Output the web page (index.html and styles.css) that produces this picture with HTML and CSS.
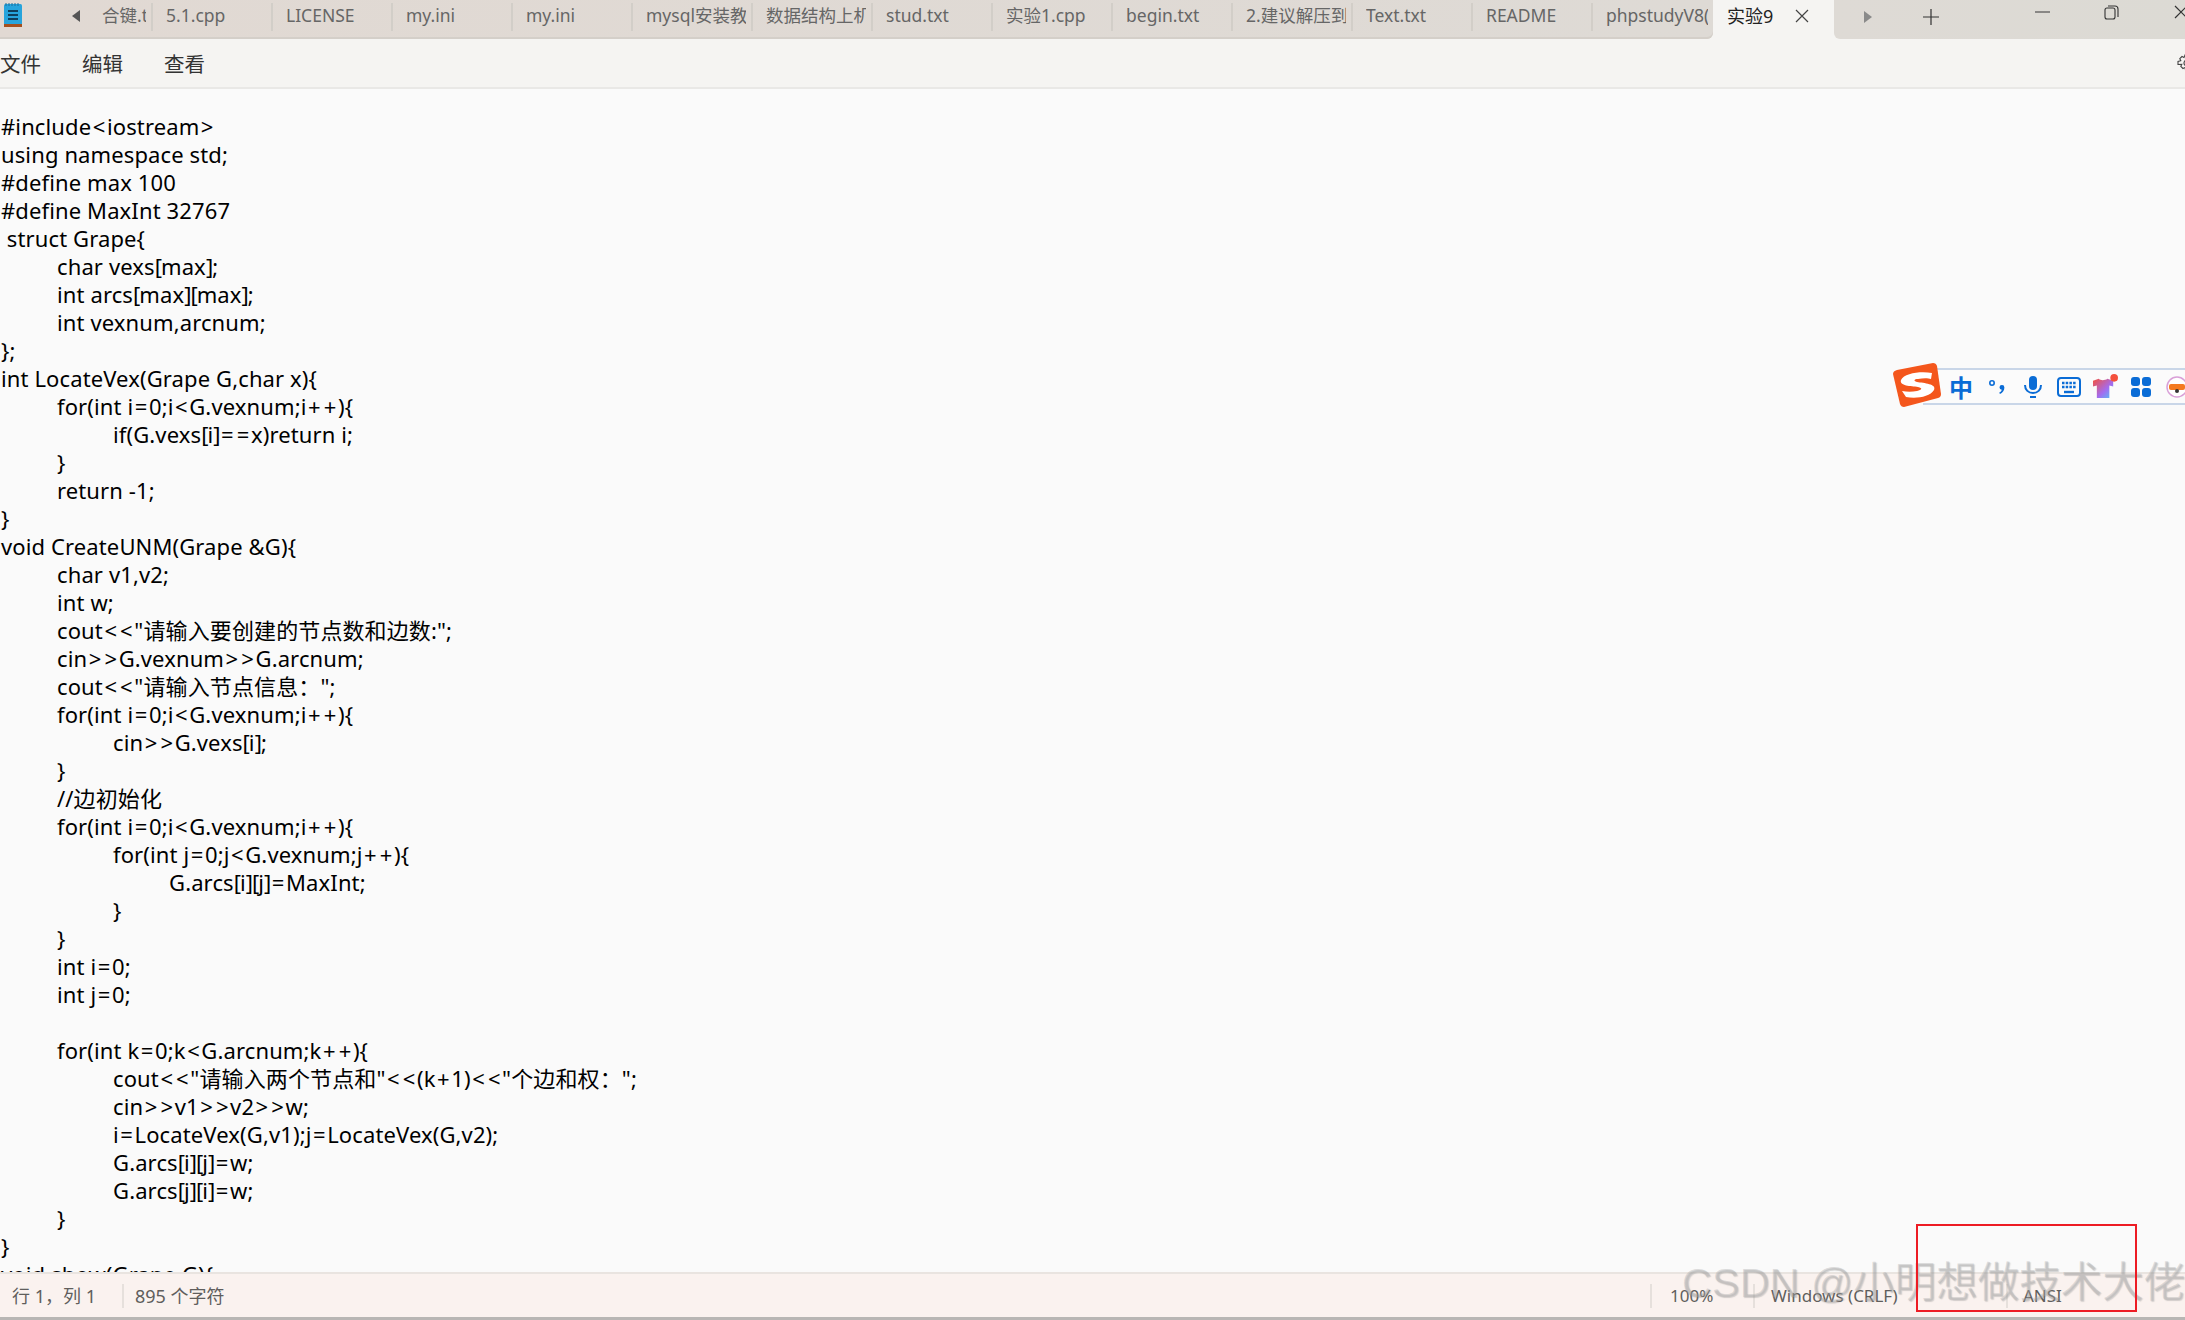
FILE: index.html
```html
<!DOCTYPE html>
<html lang="zh-CN">
<head>
<meta charset="utf-8">
<title>实验9 - 记事本</title>
<link rel="stylesheet" href="styles.css">
</head>
<body>
<div class="window">
  <header class="tabstrip">
    <div class="tabs-left">
      <svg class="app-icon" viewBox="0 0 18 24" width="18" height="24"><rect x="0" y="1" width="18" height="22" rx="1.5" fill="#27a4dc"/><rect x="0" y="21" width="18" height="3" fill="#a5501e"/><path d="M2 0v3M5 0v3M8 0v3M11 0v3M14 0v3" stroke="#1d6f9c" stroke-width="1"/><path d="M4 8h10M4 12h10M4 16h10" stroke="#0f3f5c" stroke-width="2"/></svg>
      <svg class="scroll-left" viewBox="0 0 10 14" width="10" height="14"><path d="M9 1v12L1 7z" fill="#555"/></svg>
      <div class="tab tab-partial"><span class="tab-label">合键.txt</span></div>
      <div class="tab"><span class="tab-label">5.1.cpp</span></div>
      <div class="tab"><span class="tab-label">LICENSE</span></div>
      <div class="tab"><span class="tab-label">my.ini</span></div>
      <div class="tab"><span class="tab-label">my.ini</span></div>
      <div class="tab"><span class="tab-label">mysql安装教程</span></div>
      <div class="tab"><span class="tab-label">数据结构上机实验</span></div>
      <div class="tab"><span class="tab-label">stud.txt</span></div>
      <div class="tab"><span class="tab-label">实验1.cpp</span></div>
      <div class="tab"><span class="tab-label">begin.txt</span></div>
      <div class="tab"><span class="tab-label">2.建议解压到根目录</span></div>
      <div class="tab"><span class="tab-label">Text.txt</span></div>
      <div class="tab"><span class="tab-label">README</span></div>
      <div class="tab tab-last"><span class="tab-label">phpstudyV8(1)</span></div>
    </div>
    <div class="tab-active"><span>实验9</span>
      <svg viewBox="0 0 14 14" width="14" height="14"><path d="M1 1l12 12M13 1L1 13" stroke="#444" stroke-width="1.2"/></svg>
    </div>
    <div class="strip-rest">
      <svg class="scroll-right" viewBox="0 0 10 14" width="10" height="14"><path d="M1 1v12l8-6z" fill="#8a8a8a"/></svg>
      <svg class="new-tab" viewBox="0 0 16 16" width="16" height="16"><path d="M8 0v16M0 8h16" stroke="#333" stroke-width="1.2"/></svg>
      <div class="controls">
        <div class="control"><svg viewBox="0 0 16 16" width="16" height="16"><path d="M0 8h15" stroke="#444" stroke-width="1.1"/></svg></div>
        <div class="control"><svg viewBox="0 0 16 16" width="16" height="16"><rect x="1" y="4" width="10" height="11" rx="2" fill="none" stroke="#333" stroke-width="1.1"/><path d="M4 2h7a3 3 0 0 1 3 3v8" fill="none" stroke="#333" stroke-width="1.1"/></svg></div>
        <div class="control"><svg viewBox="0 0 14 14" width="14" height="14"><path d="M1 1l12 12M13 1L1 13" stroke="#333" stroke-width="1.2"/></svg></div>
      </div>
    </div>
  </header>
  <nav class="menubar">
    <span class="menu-item">文件</span>
    <span class="menu-item">编辑</span>
    <span class="menu-item">查看</span>
    <svg class="gear" viewBox="0 0 20 20" width="20" height="20"><circle cx="10" cy="10" r="3" fill="none" stroke="#444" stroke-width="1.2"/><path d="M8.5 1h3l.5 2.5 2-1 2.2 2.2-1 2 2.8.8v3l-2.8.8 1 2-2.2 2.2-2-1-.5 2.5h-3l-.5-2.5-2 1-2.2-2.2 1-2L1 11.5v-3l2.8-.8-1-2L5 3.5l2 1z" fill="none" stroke="#444" stroke-width="1.1"/></svg>
  </nav>
  <main class="editor"><pre class="code">#include<i class="o">&lt;</i>iostream<i class="o">&gt;</i>
using namespace std;
#define max 100
#define MaxInt 32767
 struct Grape{
	char vexs<i class="b">[</i>max<i class="b">]</i>;
	int arcs<i class="b">[</i>max<i class="b">]</i><i class="b">[</i>max<i class="b">]</i>;
	int vexnum,arcnum;
};
int LocateVex(Grape G,char x){
	for(int i<i class="o">=</i>0;i<i class="o">&lt;</i>G.vexnum;i<i class="o">+</i><i class="o">+</i>){
		if(G.vexs<i class="b">[</i>i<i class="b">]</i><i class="o">=</i><i class="o">=</i>x)return i;
	}
	return -1;
}
void CreateUNM(Grape &amp;G){
	char v1,v2;
	int w;
	cout<i class="o">&lt;</i><i class="o">&lt;</i>"请输入要创建的节点数和边数:";
	cin<i class="o">&gt;</i><i class="o">&gt;</i>G.vexnum<i class="o">&gt;</i><i class="o">&gt;</i>G.arcnum;
	cout<i class="o">&lt;</i><i class="o">&lt;</i>"请输入节点信息：";
	for(int i<i class="o">=</i>0;i<i class="o">&lt;</i>G.vexnum;i<i class="o">+</i><i class="o">+</i>){
		cin<i class="o">&gt;</i><i class="o">&gt;</i>G.vexs<i class="b">[</i>i<i class="b">]</i>;
	}
	//边初始化
	for(int i<i class="o">=</i>0;i<i class="o">&lt;</i>G.vexnum;i<i class="o">+</i><i class="o">+</i>){
		for(int j<i class="o">=</i>0;j<i class="o">&lt;</i>G.vexnum;j<i class="o">+</i><i class="o">+</i>){
			G.arcs<i class="b">[</i>i<i class="b">]</i><i class="b">[</i>j<i class="b">]</i><i class="o">=</i>MaxInt;
		}
	}
	int i<i class="o">=</i>0;
	int j<i class="o">=</i>0;

	for(int k<i class="o">=</i>0;k<i class="o">&lt;</i>G.arcnum;k<i class="o">+</i><i class="o">+</i>){
		cout<i class="o">&lt;</i><i class="o">&lt;</i>"请输入两个节点和"<i class="o">&lt;</i><i class="o">&lt;</i>(k<i class="o">+</i>1)<i class="o">&lt;</i><i class="o">&lt;</i>"个边和权：";
		cin<i class="o">&gt;</i><i class="o">&gt;</i>v1<i class="o">&gt;</i><i class="o">&gt;</i>v2<i class="o">&gt;</i><i class="o">&gt;</i>w;
		i<i class="o">=</i>LocateVex(G,v1);j<i class="o">=</i>LocateVex(G,v2);
		G.arcs<i class="b">[</i>i<i class="b">]</i><i class="b">[</i>j<i class="b">]</i><i class="o">=</i>w;
		G.arcs<i class="b">[</i>j<i class="b">]</i><i class="b">[</i>i<i class="b">]</i><i class="o">=</i>w;
	}
}
void show(Grape G){
</pre></main>
  <footer class="statusbar">
    <div class="status-item status-pos">行 1，列 1</div>
    <div class="status-item status-count">895 个字符</div>
    <div class="status-item status-zoom">100%</div>
    <div class="status-item status-eol">Windows (CRLF)</div>
    <div class="status-item status-enc">ANSI</div>
  </footer>
  <div class="ime">
    <svg class="ime-logo" viewBox="0 0 48 46" width="48" height="46"><path d="M4 8 40 1q3 0 4 3l4 28q0 3-3 4L11 45q-3 0-4-3L0 12q0-3 4-4z" fill="#f4561c"/><path d="M39 11C28 9 11 11 8 18c-2 6 10 6 17 7 5 1 4 3-1 4-5 1-10 1-15 0l4 6c10 2 24 0 28-7 3-6-10-7-17-8-4-1-3-3 1-3 5-1 10-1 13 0z" fill="#fff"/></svg>
    <div class="ime-bar">
      <span class="ime-slot ime-zh">中</span>
      <span class="ime-slot"><svg viewBox="0 0 20 20" width="20" height="20"><circle cx="5" cy="6" r="2.2" fill="none" stroke="#0a6cd6" stroke-width="1.6"/><path d="M15 8a2.400 2.400 0 0 1 2.400 2.400c0 3-2 5.600-4.400 6.600l-.8-1.200c1.400-.8 2.400-1.800 2.600-3a2.400 2.400 0 0 1 .2-4.800z" fill="#0a6cd6"/></svg></span>
      <span class="ime-slot"><svg viewBox="0 0 20 24" width="20" height="24"><rect x="6" y="1" width="8" height="14" rx="4" fill="#0a6cd6"/><path d="M2 10c0 5 3.500 8 8 8s8-3 8-8" fill="none" stroke="#0a6cd6" stroke-width="2"/><path d="M7 22h6" stroke="#0a6cd6" stroke-width="2"/></svg></span>
      <span class="ime-slot"><svg viewBox="0 0 24 20" width="24" height="20"><rect x="1" y="1" width="22" height="18" rx="3" fill="none" stroke="#0a6cd6" stroke-width="2"/><path d="M5 6h14M5 10h14" stroke="#0a6cd6" stroke-width="2.400" stroke-dasharray="2.500 1.200"/><path d="M7 15h10" stroke="#0a6cd6" stroke-width="2.400"/></svg></span>
      <span class="ime-slot"><svg viewBox="0 0 28 26" width="27" height="25"><defs><linearGradient id="shirt" x1="0" y1="0" x2="1" y2="1"><stop offset="0" stop-color="#f5503c"/><stop offset=".6" stop-color="#a36cf0"/><stop offset="1" stop-color="#4fc4f5"/></linearGradient></defs><path d="M1 7l6-2c2 2 6 2 9 0l6 2 0 6-4-1 0 13-13 0 0-13-4 1z" fill="url(#shirt)"/><circle cx="23" cy="4" r="4" fill="#f4503c"/></svg></span>
      <span class="ime-slot"><svg viewBox="0 0 20 20" width="20" height="20"><rect x="0" y="0" width="9" height="9" rx="3" fill="#0a6cd6"/><rect x="11" y="0" width="9" height="9" rx="3" fill="#0a6cd6"/><rect x="0" y="11" width="9" height="9" rx="3" fill="#0a6cd6"/><rect x="11" y="11" width="9" height="9" rx="3" fill="#0a6cd6"/></svg></span>
      <span class="ime-slot"><svg viewBox="0 0 22 22" width="22" height="22"><circle cx="11" cy="11" r="10" fill="#fff" stroke="#d9a0d8" stroke-width="1.500"/><rect x="3" y="8" width="16" height="6" rx="2" fill="#f47a20"/><circle cx="11" cy="15" r="2" fill="#333"/></svg></span>
    </div>
  </div>
  <div class="watermark">CSDN @小明想做技术大佬</div>
  <div class="red-box"></div>
</div>
</body>
</html>
```
FILE: styles.css
```css
* { box-sizing: border-box; }
html, body { margin: 0; height: 100%; overflow: hidden; }
body { font-family: "Noto Sans", "Noto Sans CJK SC", sans-serif; background: #fafafa; }
.window { position: relative; height: 1320px; display: flex; flex-direction: column; overflow: hidden; }

.tabstrip { height: 39px; flex: none; display: flex; align-items: flex-start; overflow: hidden; background: #f5f4f2; }
.tabs-left {
  flex: none; height: 39px; display: flex; align-items: flex-start; border-bottom-right-radius: 6px;
  background: linear-gradient(90deg, #e1d9d3 0%, #dedad5 100%);
  box-shadow: inset 0 -2px 0 #d4cfc9;
}
.app-icon { margin: 3px 0 0 4px; flex: none; }
.scroll-left { margin: 9px 0 0 49px; flex: none; }
.tab {
  width: 120px; height: 28px; margin-top: 3px; flex: none; padding-left: 13px; padding-right: 5px;
  font-size: 17.5px; line-height: 25px; color: #666;
  border-right: 2px solid #d2cec8; font-family: "Noto Sans", "Noto Sans CJK SC", sans-serif;
}
.tab-label { display: block; overflow: hidden; white-space: nowrap; height: 28px; }
.tab-partial { width: 51px; padding-left: 0; margin-left: 21px; }
.tab-last { border-right: 0; }
.tab-active {
  width: 121px; height: 39px; flex: none; display: flex; align-items: flex-start;
  padding: 2px 0 0 14px; gap: 22px;
  font-size: 18px; line-height: 28px; color: #222; font-family: "Noto Sans", "Noto Sans CJK SC", sans-serif;
}
.tab-active svg { margin-top: 7px; }
.strip-rest {
  flex: 1; min-width: 0; height: 39px; display: flex; align-items: flex-start; border-bottom-left-radius: 6px;
  background: linear-gradient(90deg, #dedad5 0%, #dcdad4 100%);
}
.scroll-right { margin: 10px 0 0 29px; flex: none; }
.new-tab { margin: 9px 0 0 50px; flex: none; }
.controls { margin-left: auto; margin-right: -30px; display: flex; flex: none; }
.control { width: 69px; height: 24px; display: flex; align-items: center; justify-content: center; }

.menubar {
  height: 50px; flex: none; display: flex; align-items: center; gap: 41px;
  background: #f5f4f2; border-bottom: 2px solid #e9e8e6; font-size: 20.5px; color: #333;
  font-family: "Noto Sans CJK SC", sans-serif;
}
.gear { margin-left: auto; margin-right: -12px; }

.editor { flex: 1; min-height: 0; overflow: hidden; background: #fafafa; padding: 23px 0 0 1px; }
.code {
  margin: 0; font-family: "Noto Sans", "Noto Sans CJK SC", sans-serif; font-size: 22px; line-height: 28px;
  color: #000; tab-size: 56px; white-space: pre; letter-spacing: .12px;
}
.o, .b { display: inline-block; height: 28px; line-height: 28px; font-style: normal; vertical-align: top; }
.o { padding: 0 1.5px; }
.b { letter-spacing: -1px; }

.statusbar {
  height: 48px; flex: none; display: flex; align-items: center;
  background: #faf2ef; border-top: 2px solid #e9e4e0; border-bottom: 3px solid #b8b6b4;
  font-size: 17px; color: #605e5c; font-family: "Noto Sans", "Noto Sans CJK SC", sans-serif;
}
.status-item { height: 24px; line-height: 24px; white-space: nowrap; border-left: 2px solid #e6e0dc; }
.status-pos { width: 122px; padding-left: 12px; border-left: 0; font-size: 18px; }
.status-count { width: 1528px; padding-left: 11px; font-size: 18px; }
.status-zoom { width: 103px; padding-left: 18px; }
.status-eol { width: 253px; padding-left: 16px; }
.status-enc { padding-left: 15px; flex: 1; }

.ime { position: absolute; left: 1893px; top: 362px; width: 292px; height: 46px; }
.ime-logo { position: absolute; left: 0; top: 0; z-index: 1; }
.ime-bar {
  position: absolute; left: 30px; top: 6px; width: 280px; height: 37px;
  background: #fbfbfb; border-top: 2px solid #c9d6e8; border-bottom: 2px solid #c9d6e8;
  display: flex; align-items: center; padding-left: 20px;
}
.ime-slot { width: 36px; flex: none; display: flex; align-items: center; justify-content: center; }
.ime-zh { font-size: 24px; line-height: 1; font-weight: 700; color: #0a6cd6; font-family: "Noto Sans CJK SC", sans-serif; }

.watermark {
  position: absolute; left: 1682px; top: 1255px; white-space: nowrap; font-size: 41.500px; line-height: 56px;
  color: rgba(170,170,170,.36); text-shadow: 1px 1px 1px rgba(120,120,120,.3);
  font-family: "Liberation Sans", "Noto Sans CJK SC", sans-serif;
}
.red-box { position: absolute; left: 1916px; top: 1224px; width: 221px; height: 88px; border: 2px solid #ed1c24; }
```
